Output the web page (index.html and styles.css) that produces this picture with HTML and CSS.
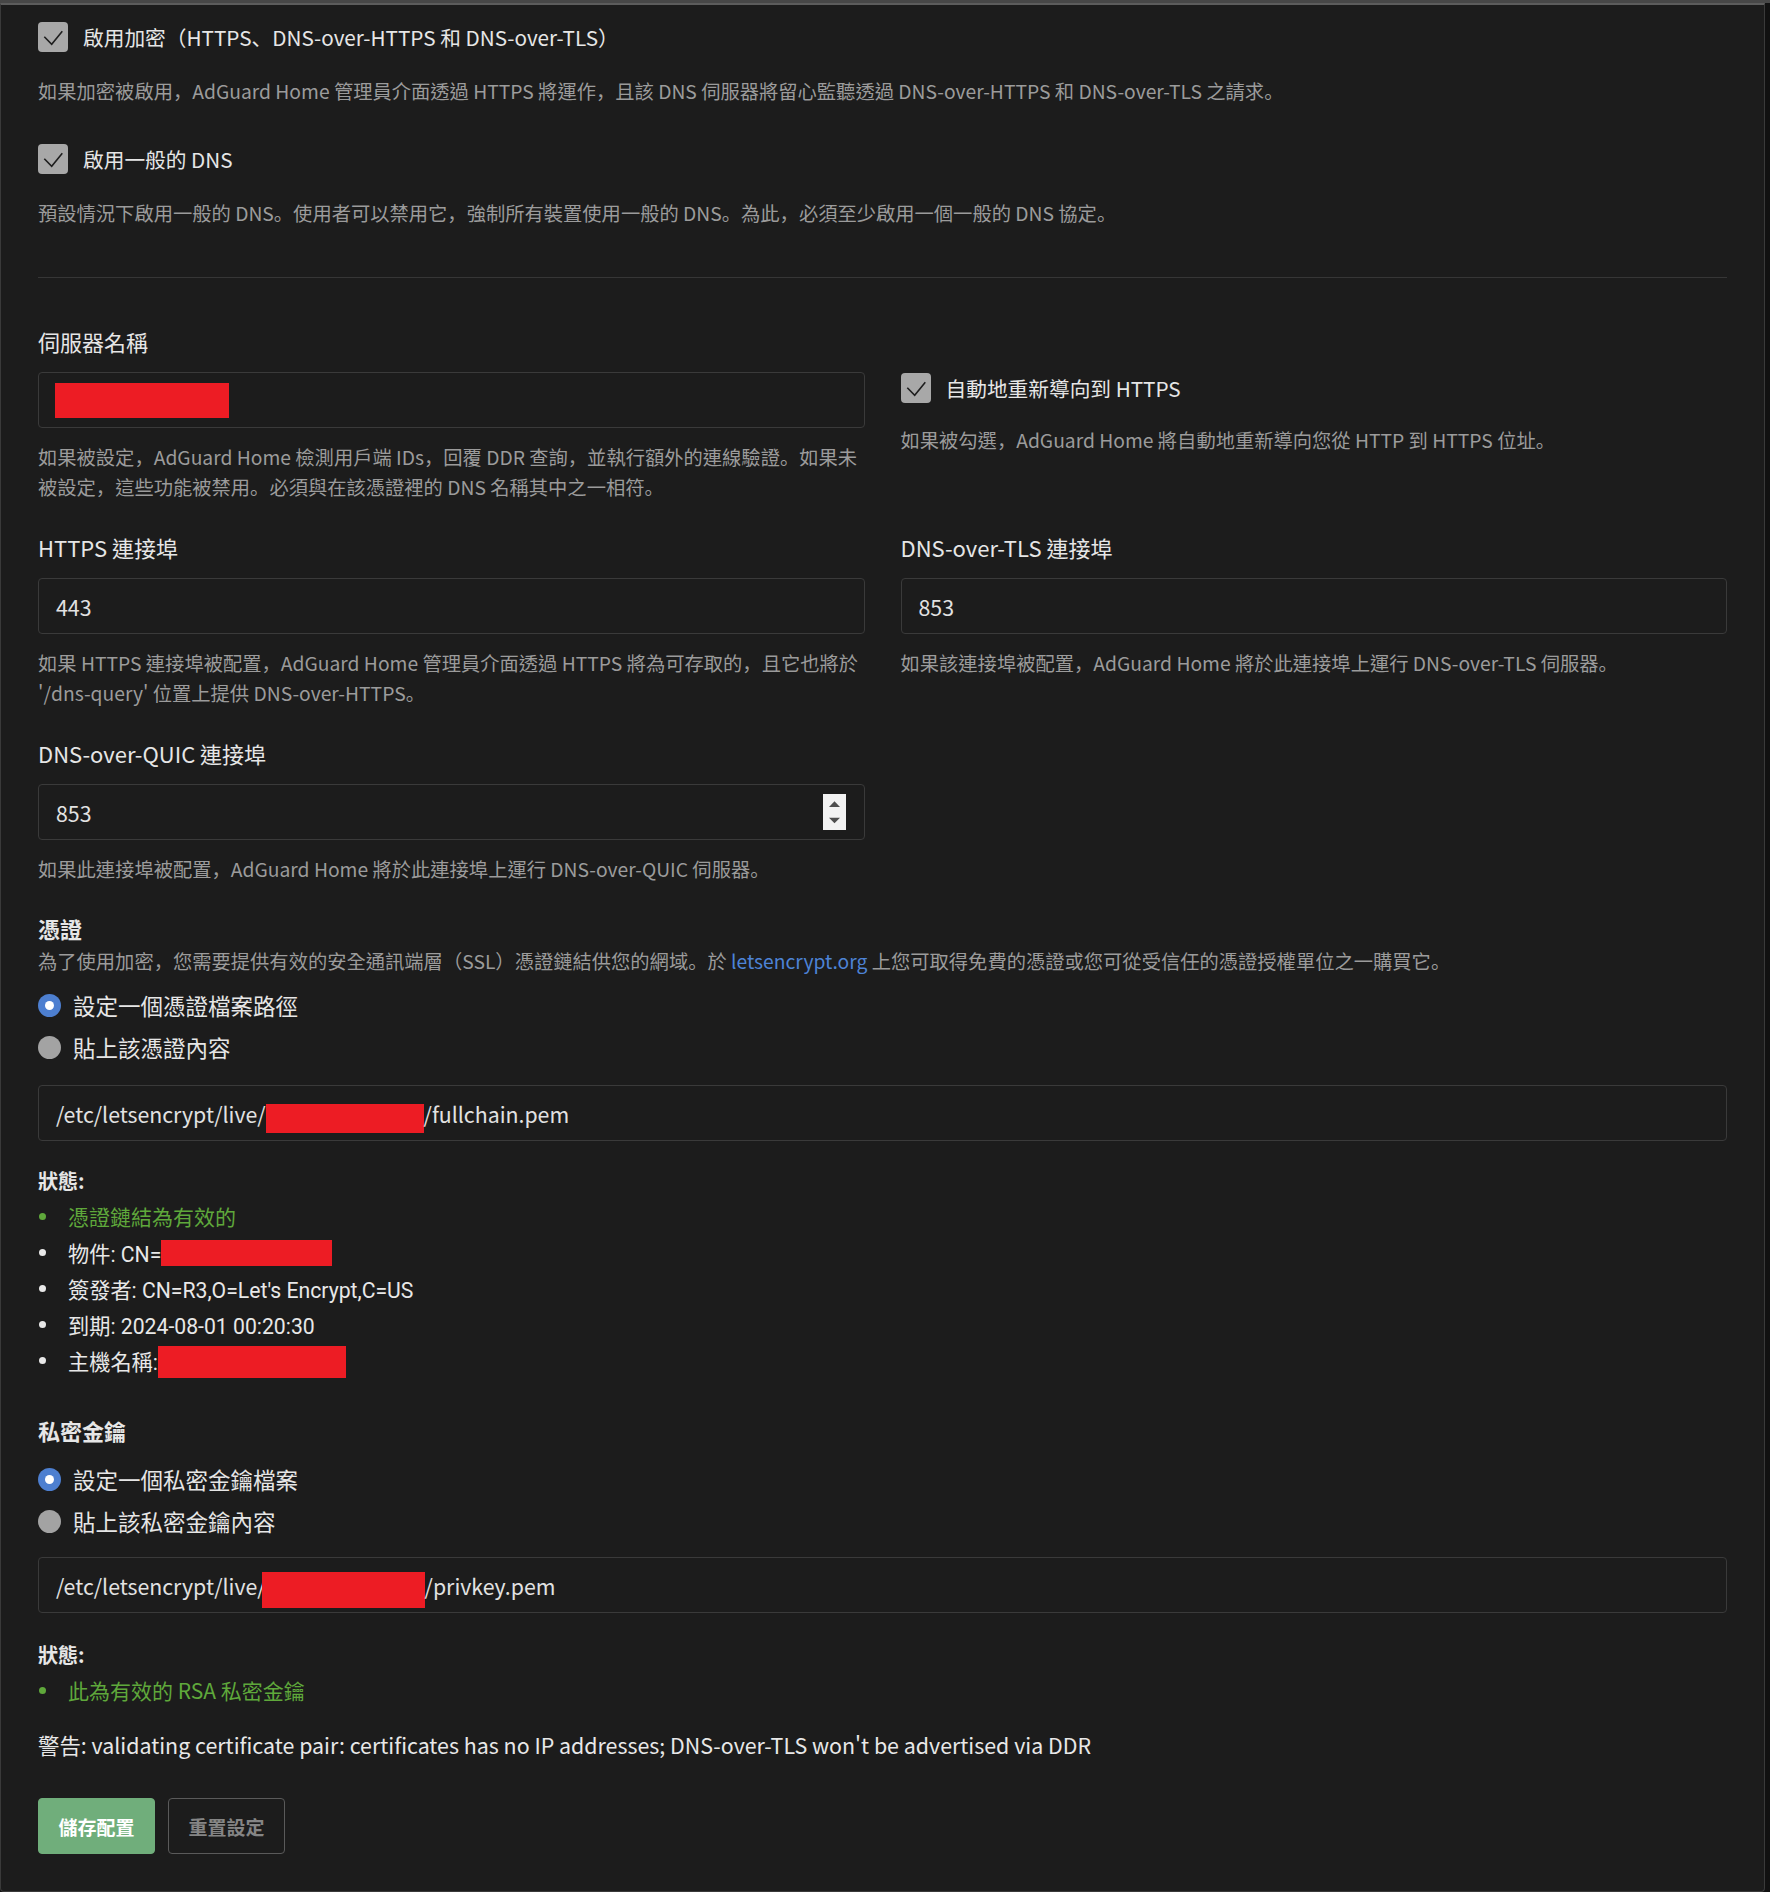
FILE: index.html
```html
<!DOCTYPE html>
<html lang="zh-Hant">
<head>
<meta charset="utf-8">
<title>加密設定</title>
<link rel="stylesheet" href="styles.css">
</head>
<body>
<div class="topbar"></div>
<form class="card">
  <label class="check">
    <span class="box"><svg width="30" height="30" viewBox="0 0 30 30"><polyline points="6.3,14.7 13.7,22.3 24.3,9.3" fill="none" stroke="#1e1e1e" stroke-width="1.6"/></svg></span>
    <span>啟用加密（HTTPS<span class="p" lang="zh-Hans">、</span>DNS-over-HTTPS 和 DNS-over-TLS）</span>
  </label>
  <p class="help first">如果加密被啟用<span class="p" lang="zh-Hans">，</span>AdGuard Home 管理員介面透過 HTTPS 將運作<span class="p" lang="zh-Hans">，</span>且該 DNS 伺服器將留心監聽透過 DNS-over-HTTPS 和 DNS-over-TLS 之請求<span class="p" lang="zh-Hans">。</span></p>
  <label class="check second">
    <span class="box"><svg width="30" height="30" viewBox="0 0 30 30"><polyline points="6.3,14.7 13.7,22.3 24.3,9.3" fill="none" stroke="#1e1e1e" stroke-width="1.6"/></svg></span>
    <span>啟用一般的 DNS</span>
  </label>
  <p class="help first">預設情況下啟用一般的 DNS<span class="p" lang="zh-Hans">。</span>使用者可以禁用它<span class="p" lang="zh-Hans">，</span>強制所有裝置使用一般的 DNS<span class="p" lang="zh-Hans">。</span>為此<span class="p" lang="zh-Hans">，</span>必須至少啟用一個一般的 DNS 協定<span class="p" lang="zh-Hans">。</span></p>

  <hr class="divider">

  <div class="grid">
    <div class="field">
      <div class="label">伺服器名稱</div>
      <div class="input"><span class="redact r-name"></span></div>
      <p class="help">如果被設定<span class="p" lang="zh-Hans">，</span>AdGuard Home 檢測用戶端 IDs<span class="p" lang="zh-Hans">，</span>回覆 DDR 查詢<span class="p" lang="zh-Hans">，</span>並執行額外的連線驗證<span class="p" lang="zh-Hans">。</span>如果未被設定<span class="p" lang="zh-Hans">，</span>這些功能被禁用<span class="p" lang="zh-Hans">。</span>必須與在該憑證裡的 DNS 名稱其中之一相符<span class="p" lang="zh-Hans">。</span></p>
    </div>
    <div class="field redirect">
      <label class="check">
        <span class="box"><svg width="30" height="30" viewBox="0 0 30 30"><polyline points="6.3,14.7 13.7,22.3 24.3,9.3" fill="none" stroke="#1e1e1e" stroke-width="1.6"/></svg></span>
        <span>自動地重新導向到 HTTPS</span>
      </label>
      <p class="help after-check">如果被勾選<span class="p" lang="zh-Hans">，</span>AdGuard Home 將自動地重新導向您從 HTTP 到 HTTPS 位址<span class="p" lang="zh-Hans">。</span></p>
    </div>
    <div class="field">
      <div class="label">HTTPS 連接埠</div>
      <div class="input">443</div>
      <p class="help">如果 HTTPS 連接埠被配置<span class="p" lang="zh-Hans">，</span>AdGuard Home 管理員介面透過 HTTPS 將為可存取的<span class="p" lang="zh-Hans">，</span>且它也將於 '/dns-query' 位置上提供 DNS-over-HTTPS<span class="p" lang="zh-Hans">。</span></p>
    </div>
    <div class="field">
      <div class="label">DNS-over-TLS 連接埠</div>
      <div class="input">853</div>
      <p class="help">如果該連接埠被配置<span class="p" lang="zh-Hans">，</span>AdGuard Home 將於此連接埠上運行 DNS-over-TLS 伺服器<span class="p" lang="zh-Hans">。</span></p>
    </div>
    <div class="field">
      <div class="label">DNS-over-QUIC 連接埠</div>
      <div class="input">853
        <span class="spinner"><svg width="23" height="36" viewBox="0 0 23 36"><rect width="23" height="36" fill="#f2f2f2"/><polygon points="6,13 17,13 11.5,7.3" fill="#4e4e4e"/><polygon points="6,23.7 17,23.7 11.5,29.3" fill="#4e4e4e"/></svg></span>
      </div>
      <p class="help">如果此連接埠被配置<span class="p" lang="zh-Hans">，</span>AdGuard Home 將於此連接埠上運行 DNS-over-QUIC 伺服器<span class="p" lang="zh-Hans">。</span></p>
    </div>
  </div>

  <div class="heading cert-h">憑證</div>
  <p class="desc">為了使用加密<span class="p" lang="zh-Hans">，</span>您需要提供有效的安全通訊端層（SSL）憑證鏈結供您的網域<span class="p" lang="zh-Hans">。</span>於 <a class="link" href="#">letsencrypt.org</a> 上您可取得免費的憑證或您可從受信任的憑證授權單位之一購買它<span class="p" lang="zh-Hans">。</span></p>
  <div class="radios">
    <label class="radio"><span class="dot on"><span class="inner"></span></span><span>設定一個憑證檔案路徑</span></label>
    <label class="radio"><span class="dot"></span><span>貼上該憑證內容</span></label>
  </div>
  <div class="input path">/etc/letsencrypt/live/<span class="redact r-chain"></span>/fullchain.pem</div>
  <div class="status-h">狀態:</div>
  <ul class="status">
    <li class="ok">憑證鏈結為有效的</li>
    <li class="info">物件: CN=<span class="redact r-cn"></span></li>
    <li class="info">簽發者: CN=R3,O=Let's Encrypt,C=US</li>
    <li class="info">到期: 2024-08-01 00:20:30</li>
    <li class="info">主機名稱:<span class="redact r-host"></span></li>
  </ul>

  <div class="heading key-h">私密金鑰</div>
  <div class="radios key-radios">
    <label class="radio"><span class="dot on"><span class="inner"></span></span><span>設定一個私密金鑰檔案</span></label>
    <label class="radio"><span class="dot"></span><span>貼上該私密金鑰內容</span></label>
  </div>
  <div class="input path key-path">/etc/letsencrypt/live/<span class="redact r-key"></span>/privkey.pem</div>
  <div class="status-h key-status-h">狀態:</div>
  <ul class="status key-status">
    <li class="ok">此為有效的 RSA 私密金鑰</li>
  </ul>
  <p class="warning">警告: validating certificate pair: certificates has no IP addresses; DNS-over-TLS won't be advertised via DDR</p>
  <div class="buttons">
    <button type="button" class="btn save">儲存配置</button>
    <button type="button" class="btn reset">重置設定</button>
  </div>
</form>
</body>
</html>
```
FILE: styles.css
```css
* { box-sizing: border-box; }
html, body { margin: 0; padding: 0; }
body {
  background: #111111;
  font-family: "Noto Sans CJK TC", "Noto Sans", sans-serif;
  color: #e4e4e4;
  width: 1770px;
  min-height: 1892px;
}
.p { font-family: "Noto Sans CJK SC", "Noto Sans CJK TC", sans-serif; }
.topbar { height: 3px; background: #474747; width: 1770px; }
.card {
  display: block;
  width: 1765px;
  margin: 0;
  background: #1c1c1c;
  border: 1px solid #3a3a3a;
  border-top: 2px solid #5c5c5c;
  border-radius: 0 0 4px 4px;
  padding: 17px 37px 37px 37px;
}
.check {
  display: flex;
  align-items: center;
  gap: 15px;
  height: 30px;
  font-size: 20.7px;
  line-height: 30px;
  color: #e6e6e6;
}
.check.second { margin-top: 38px; }
.box {
  flex: none;
  width: 30px;
  height: 30px;
  border-radius: 4px;
  background: #a8a8a8;
  display: flex;
}
.help {
  margin: 14px 0 0;
  font-size: 19.3px;
  line-height: 30px;
  color: #9b9b9b;
}
.help.first { margin-top: 24px; }
.help.after-check { margin-top: 22px; }
.divider {
  margin: 49px 0 0;
  border: 0;
  height: 1px;
  background: #363636;
}
.grid {
  display: grid;
  grid-template-columns: 1fr 1fr;
  column-gap: 36px;
  row-gap: 29px;
  margin-top: 47px;
}
.label {
  font-size: 22px;
  line-height: 32px;
  margin-bottom: 15px;
  color: #e6e6e6;
}
.redirect { padding-top: 48px; }
.input {
  height: 56px;
  border: 1px solid #3a3a3a;
  border-radius: 4px;
  background: #1c1c1c;
  padding: 0 18px 0 17px;
  display: flex;
  align-items: center;
  font-size: 21.3px;
  color: #e2e2e2;
}
.spinner { margin-left: auto; display: flex; }
.redact { display: inline-block; background: #ed1c24; flex: none; }
.r-name { width: 174px; height: 35px; margin-left: -1px; }
.r-chain { width: 158px; height: 29px; margin-top: 10px; }
.r-key { width: 163px; height: 36px; margin-top: 9px; margin-left: -4px; }
.r-cn { width: 171px; height: 26px; vertical-align: middle; position: relative; top: 1px; }
.r-host { width: 188px; height: 32px; vertical-align: middle; position: relative; top: 2px; }
.heading {
  font-weight: 700;
  font-size: 22px;
  line-height: 30px;
  color: #e6e6e6;
}
.cert-h { margin-top: 29px; }
.key-h { margin-top: 37px; }
.desc {
  margin: 3px 0 0;
  font-size: 19.3px;
  line-height: 30px;
  color: #9b9b9b;
}
.link { color: #4d83d6; text-decoration: none; }
.radios {
  margin-top: 14px;
  display: flex;
  flex-direction: column;
  gap: 12px;
}
.key-radios { margin-top: 19px; }
.radio {
  display: flex;
  align-items: center;
  gap: 12px;
  height: 30px;
  font-size: 22.5px;
  color: #e6e6e6;
}
.dot {
  flex: none;
  width: 23px;
  height: 23px;
  border-radius: 50%;
  background: #a3a3a3;
}
.dot.on {
  background: #4d7fd0;
  display: flex;
  align-items: center;
  justify-content: center;
}
.inner { width: 9px; height: 9px; border-radius: 50%; background: #ffffff; }
.path { margin-top: 23px; }
.key-path { margin-top: 21px; }
.status-h {
  margin-top: 25px;
  font-weight: 700;
  font-size: 20px;
  line-height: 30px;
  color: #e6e6e6;
}
.key-status-h { margin-top: 27px; }
.status {
  list-style: none;
  margin: 2px 0 0;
  padding: 0;
}
.key-status { margin-top: 2px; }
.status li {
  display: flex;
  align-items: center;
  height: 36px;
  white-space: pre;
}
.status li::before {
  content: "";
  flex: none;
  width: 7px;
  height: 7px;
  border-radius: 50%;
  margin: 0 22px 0 1px;
  background: currentColor;
}
.status .ok { color: #5fa83b; font-size: 21px; }
.status .info {
  color: #e8e8e8;
  font-family: Roboto, "Noto Sans CJK TC", sans-serif;
  font-size: 21.2px;
}
.warning {
  margin: 22px 0 0;
  font-size: 21.4px;
  line-height: 30px;
  color: #e8e8e8;
}
.buttons {
  margin-top: 38px;
  display: flex;
  gap: 13px;
}
.btn {
  width: 117px;
  height: 56px;
  border-radius: 4px;
  font-family: "Noto Sans CJK TC", sans-serif;
  font-weight: 700;
  font-size: 19px;
  padding: 0;
  cursor: pointer;
}
.save { background: #70ae7b; border: 1px solid #70ae7b; color: #ffffff; }
.reset { background: transparent; border: 1px solid #5a5a5a; color: #858585; }
```
